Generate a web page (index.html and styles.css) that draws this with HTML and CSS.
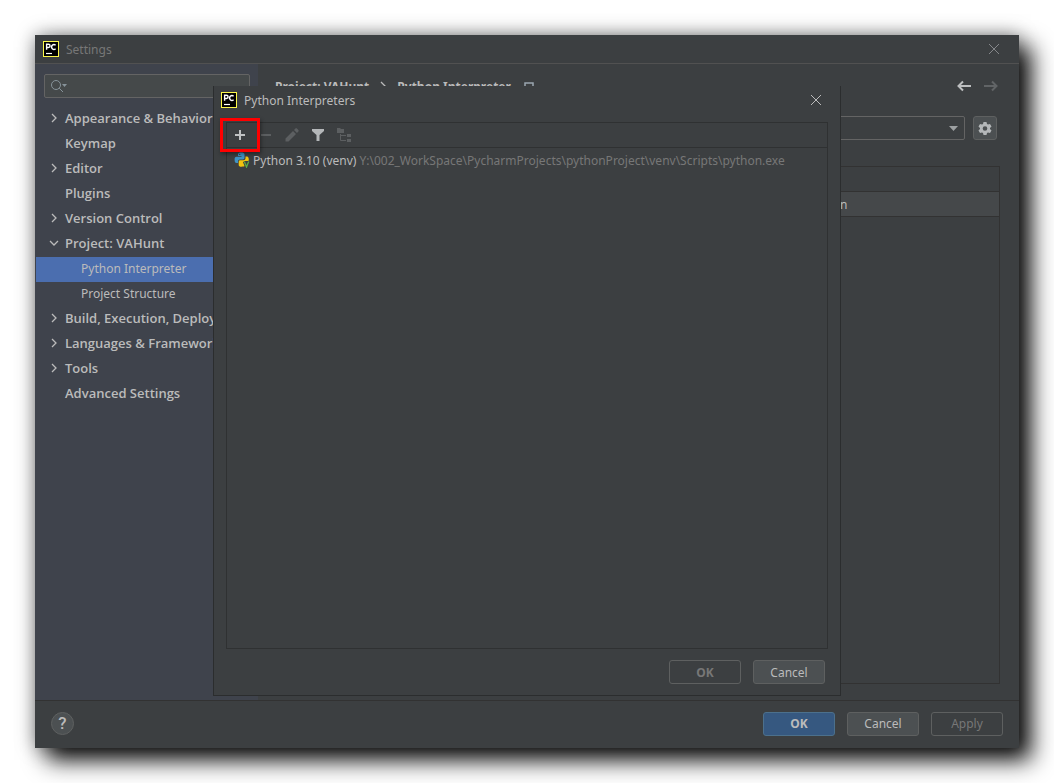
FILE: index.html
```html
<!DOCTYPE html>
<html lang="en">
<head>
<meta charset="utf-8">
<meta name="viewport" content="width=device-width, initial-scale=1">
<title>Settings</title>
<link rel="stylesheet" href="styles.css">
</head>
<body>
<svg class="defs" aria-hidden="true">
  <symbol id="logo" viewBox="0 0 16 16">
    <rect x=".5" y=".5" width="15" height="15" fill="#000" stroke="#fcf84a"/>
    <path d="M3.6 8.8V3.2h1.8a1.6 1.6 0 0 1 0 3.3H3.6M12.6 4.2A2.4 2.4 0 1 0 12.6 7.8" fill="none" stroke="#fff" stroke-width="1.4"/>
    <path d="M3 12.5h6" stroke="#fff" stroke-width="1.2"/>
  </symbol>
  <symbol id="close" viewBox="0 0 12 12"><path d="M1 1l10 10M11 1L1 11" fill="none" stroke="currentColor" stroke-width="1"/></symbol>
  <symbol id="right" viewBox="0 0 10 10"><path d="M3 1l4 4-4 4" fill="none" stroke="currentColor" stroke-width="1.3"/></symbol>
  <symbol id="down" viewBox="0 0 10 10"><path d="M1 3l4 4 4-4" fill="none" stroke="currentColor" stroke-width="1.3"/></symbol>
</svg>
<main class="window">
  <header class="titlebar">
    <svg class="icon16"><use href="#logo"/></svg>
    <h1 class="title">Settings</h1>
    <button class="icon-button" aria-label="Close settings"><svg class="icon12"><use href="#close"/></svg></button>
  </header>
  <div class="body">
    <aside class="sidebar">
      <label class="search">
        <svg class="search-icon" viewBox="0 0 18 14"><circle cx="6" cy="6" r="4.5" fill="none" stroke="#87939a"/><path d="M9.2 9.2L13 13" stroke="#87939a"/><path d="M12 5h5l-2.500 3z" fill="#87939a"/></svg>
        <input class="search-input" type="search" aria-label="Search settings">
      </label>
      <nav class="tree">
        <a class="node" href="#"><svg class="icon10"><use href="#right"/></svg>Appearance &amp; Behavior</a>
        <a class="node" href="#"><svg class="icon10"></svg>Keymap</a>
        <a class="node" href="#"><svg class="icon10"><use href="#right"/></svg>Editor</a>
        <a class="node" href="#"><svg class="icon10"></svg>Plugins</a>
        <a class="node" href="#"><svg class="icon10"><use href="#right"/></svg>Version Control</a>
        <a class="node" href="#"><svg class="icon10"><use href="#down"/></svg>Project: VAHunt</a>
        <a class="node child selected" href="#">Python Interpreter</a>
        <a class="node child" href="#">Project Structure</a>
        <a class="node" href="#"><svg class="icon10"><use href="#right"/></svg>Build, Execution, Deployment</a>
        <a class="node" href="#"><svg class="icon10"><use href="#right"/></svg>Languages &amp; Frameworks</a>
        <a class="node" href="#"><svg class="icon10"><use href="#right"/></svg>Tools</a>
        <a class="node" href="#"><svg class="icon10"></svg>Advanced Settings</a>
      </nav>
    </aside>
    <section class="content">
      <div class="crumbs">
        <span>Project: VAHunt</span><svg class="icon10"><use href="#right"/></svg><span>Python Interpreter</span>
        <svg class="scope" viewBox="0 0 10 8"><path d="M1 7V1h8v6z" fill="none" stroke="#9aa7b0" stroke-width="1.5"/></svg>
        <span class="history">
          <button class="icon-button" aria-label="Back"><svg class="arrow" viewBox="0 0 14 12"><path d="M14 6H2M6 1.500L1.500 6 6 10.500" fill="none" stroke="#bdbfc0" stroke-width="2"/></svg></button>
          <button class="icon-button" aria-label="Forward" disabled><svg class="arrow" viewBox="0 0 14 12"><path d="M0 6h12M8 1.500L12.500 6 8 10.500" fill="none" stroke="#616466" stroke-width="2"/></svg></button>
        </span>
      </div>
      <div class="picker">
        <span class="combo">
          <select class="select" aria-label="Python interpreter"><option></option></select>
          <svg class="combo-arrow" viewBox="0 0 9 5"><path d="M0 0h9L4.500 5z" fill="#9da0a2"/></svg>
        </span>
        <button class="gear" aria-label="Interpreter options">
          <svg class="icon16" viewBox="0 0 16 16"><path fill="#b4b7b9" fill-rule="evenodd" d="M6.500 2h3l.5 2 1 .6 2-.6 1.500 2.600-1.500 1.400v1l1.500 1.400L13 13l-2-.6-1 .6-.5 2h-3L6 13l-1-.6-2 .6-1.500-2.600L3 9V8L1.500 6.600 3 4l2 .6L6 4zM8 6.200a2.300 2.300 0 1 0 0 4.600 2.300 2.300 0 0 0 0-4.600z"/></svg>
        </button>
      </div>
      <div class="packages">
        <table class="table">
          <thead><tr><th></th><th></th></tr></thead>
          <tbody><tr><td></td><td>n</td></tr></tbody>
        </table>
      </div>
    </section>
  </div>
  <footer class="footer">
    <button class="help" aria-label="Help">?</button>
    <button class="button primary">OK</button>
    <button class="button">Cancel</button>
    <button class="button" disabled>Apply</button>
  </footer>

  <section class="dialog" role="dialog" aria-labelledby="dialog-title">
    <header class="dialog-title">
      <svg class="icon16"><use href="#logo"/></svg>
      <h2 class="title" id="dialog-title">Python Interpreters</h2>
      <button class="icon-button" aria-label="Close dialog"><svg class="icon12"><use href="#close"/></svg></button>
    </header>
    <div class="panel">
      <div class="toolbar">
        <button class="tool highlighted" aria-label="Add"><svg class="icon16" viewBox="0 0 16 16"><path d="M8 3v10M3 8h10" stroke="#c0c2c3" stroke-width="2"/></svg></button>
        <button class="tool" aria-label="Remove" disabled><svg class="icon16" viewBox="0 0 16 16"><path d="M3 8h10" stroke="#5c5f61" stroke-width="2"/></svg></button>
        <button class="tool" aria-label="Edit" disabled><svg class="icon16" viewBox="0 0 16 16"><path d="M1.500 14.500v-3l7.500-7.500 3 3-7.500 7.500zM10 3l1.700-1.700h1L14.600 3.200v1L13 6z" fill="#5c5f61"/></svg></button>
        <button class="tool" aria-label="Filter"><svg class="icon16" viewBox="0 0 16 16"><path d="M2 2h12v2l-4.500 4v6h-3V8L2 4z" fill="#b4b7b9"/></svg></button>
        <button class="tool" aria-label="Show paths" disabled><svg class="icon16" viewBox="0 0 16 16"><path d="M1 1h3l1 1h3v4H1zM11 7h4v3h-4zM11 12h4v3h-4z" fill="#5c5f61"/><path d="M4.500 7v6.500H10M4.500 8.500H10" fill="none" stroke="#5c5f61"/></svg></button>
      </div>
      <ul class="list">
        <li class="item">
          <svg class="icon16" viewBox="0 0 16 16"><path d="M4 4V2.500C4 .9 5.300.5 7.200.5s3.300.5 3.300 2v3.300c0 1.200-.8 1.700-1.700 1.700H6C4.600 7.500 4 8.400 4 9.500V11H2.500C1 11 .6 9.500.6 7.500S1 4.700 2.500 4.700h5V4z" fill="#3f93c5"/><path d="M11.500 4.500H13c1.300 0 1.800 1.500 1.800 3.200l-.3 1.300H10l1.500 4.500c-.6.8-2 1.200-4 1.200-1.900 0-2.800-.6-2.800-1.800V10c0-1.200.6-1.700 1.600-1.700h3c1.400 0 2.200-.7 2.200-2z" fill="#f2c40f"/><path d="M10.300 9.500l2.200 5.500 2.200-5.500" fill="none" stroke="#3c3f41" stroke-width="3"/><path d="M10.300 9.500l2.200 5.500 2.200-5.500" fill="none" stroke="#5cae45" stroke-width="1.300"/><circle cx="5.700" cy="2.400" r=".7" fill="#3c3f41"/></svg>
          <span>Python 3.10 (venv)</span><span class="path">Y:\002_WorkSpace\PycharmProjects\pythonProject\venv\Scripts\python.exe</span>
        </li>
      </ul>
    </div>
    <div class="actions">
      <button class="button strong" disabled>OK</button>
      <button class="button">Cancel</button>
    </div>
  </section>
</main>
</body>
</html>
```

FILE: styles.css
```css
* { box-sizing: border-box; }
body {
  margin: 0;
  min-height: 100vh;
  padding: 35px;
  display: flex;
  background: #fff;
  color: #bbb;
  font: 12px/21px "Noto Sans", "Open Sans", sans-serif;
}
button, input, select { font: inherit; color: inherit; }
button { padding: 0; }
svg { display: block; flex: none; }
.defs { position: absolute; width: 0; height: 0; }
.icon16 { width: 16px; height: 16px; }
.icon12 { width: 12px; height: 12px; }
.icon10 { width: 10px; height: 10px; }

.window {
  position: relative;
  flex: 1;
  min-width: 0;
  display: flex;
  flex-direction: column;
  background: #3c3f41;
  box-shadow: 12px 12px 22px rgba(0, 0, 0, .95), 0 0 18px rgba(0, 0, 0, .4);
}
.titlebar {
  height: 29px;
  display: flex;
  align-items: center;
  gap: 7px;
  padding: 0 19px 0 8px;
  border-bottom: 1px solid #515151;
  color: #85878a;
}
.title { flex: 1; margin: 0; font-size: 12px; font-weight: 400; }
.titlebar .title { color: #777; }
.icon-button { display: flex; border: 0; background: none; }

.body { flex: 1; display: flex; min-height: 0; }
.sidebar {
  flex: none;
  width: 223px;
  padding-top: 10px;
  overflow: hidden;
  background: #3f434c;
}
.search {
  display: flex;
  align-items: center;
  height: 24px;
  margin: 0 8px 9px 9px;
  padding-left: 5px;
  border: 1px solid #646464;
  border-radius: 2px;
  background: #45494a;
}
.search-icon { width: 18px; height: 14px; }
.search-input { flex: 1; min-width: 0; border: 0; outline: 0; background: none; }
.tree { display: flex; flex-direction: column; }
.node {
  display: flex;
  align-items: center;
  gap: 6px;
  height: 25px;
  padding: 0 0 3px 14px;
  color: #bbb;
  font: 600 13px/20px "Open Sans", "Noto Sans", sans-serif;
  white-space: nowrap;
  text-decoration: none;
}
.child { padding: 0 0 1px 46px; font: 400 12px/20px "Noto Sans", "Open Sans", sans-serif; }
.selected { margin-left: 1px; padding-left: 45px; background: #4b6eaf; }

.content {
  flex: 1;
  min-width: 0;
  display: flex;
  flex-direction: column;
  padding: 12px 19px 16px 17px;
}
.crumbs { display: flex; align-items: center; gap: 9px; height: 20px; font-weight: 700; }
.scope { width: 10px; height: 8px; margin-left: 4px; }
.history { display: flex; gap: 13px; margin: 0 2px 0 auto; }
.arrow { width: 14px; height: 12px; }
.picker { display: flex; gap: 8px; margin: 20px 3px 26px 0; }
.combo { position: relative; flex: 1; display: flex; }
.select {
  flex: 1;
  height: 24px;
  border: 1px solid #646464;
  border-radius: 2px;
  background: #3c3f41;
  appearance: none;
}
.combo-arrow { position: absolute; right: 7px; top: 10px; width: 9px; height: 5px; }
.gear {
  width: 24px;
  height: 24px;
  display: grid;
  place-items: center;
  border: 1px solid #5e6060;
  border-radius: 3px;
  background: #4c5052;
}
.packages { flex: 1; border: 1px solid #323232; }
.table { width: 100%; table-layout: fixed; border-collapse: separate; border-spacing: 0; }
.table th, .table td { height: 25px; padding: 0; border-bottom: 1px solid #323232; text-align: left; }
.table th:last-child { width: 159px; }
.table td { background: #45484a; }

.footer {
  display: flex;
  align-items: center;
  gap: 12px;
  height: 48px;
  padding: 0 16px 2px;
  border-top: 1px solid #323232;
}
.help {
  width: 23px;
  height: 23px;
  margin-right: auto;
  border: 1px solid #5e6060;
  border-radius: 50%;
  background: #4c5052;
  font: 500 17px/21px Roboto, sans-serif;
}
.button {
  width: 72px;
  height: 24px;
  border: 1px solid #5e6060;
  border-radius: 3px;
  background: #4c5052;
}
.button:disabled { background: none; color: #777; }
.primary { border-color: #4c708c; background: #365880; font-weight: 700; }
.strong { font-weight: 700; }

.dialog {
  position: absolute;
  inset: 51px 178px 52px;
  display: flex;
  flex-direction: column;
  border: 1px solid #2b2d2e;
  border-top: 0;
  background: #3c3f41;
}
.dialog-title {
  display: flex;
  align-items: center;
  gap: 7px;
  height: 28px;
  padding: 0 18px 0 7px;
}
.panel { flex: 1; margin: 8px 12px 0; border: 1px solid #2f3132; }
.toolbar {
  display: flex;
  align-items: center;
  height: 25px;
  border-bottom: 1px solid #2f3132;
}
.tool { display: grid; place-items: center; width: 26px; height: 24px; border: 0; background: none; }
.highlighted { position: relative; }
.highlighted::after {
  content: "";
  position: absolute;
  inset: -5px -7px;
  border: 3px solid #f00;
  box-shadow: 1px 2px 4px rgba(0, 0, 0, .4);
}
.list { margin: 0; padding: 0; list-style: none; }
.item { display: flex; align-items: center; gap: 3px; height: 24px; padding-left: 7px; white-space: nowrap; }
.path { color: #777; }
.actions { display: flex; justify-content: flex-end; gap: 12px; padding: 11px 15px; }
```
